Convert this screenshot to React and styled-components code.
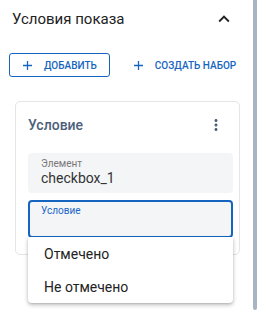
import styled, { createGlobalStyle } from "styled-components"

const GlobalStyle = createGlobalStyle`
    body{
        margin: 0;
        background: #FFFFFF;
        font-family: Roboto, "Liberation Sans", sans-serif;
    }
`

const BLUE = '#1565C0'

function Plus(){
    return(
        <svg width="9" height="9" viewBox="0 0 10 10">
            <path d="M5 0v10M0 5h10" stroke="currentColor" strokeWidth="1.4" fill="none"/>
        </svg>
    )
}

export default function App(){
    const options = ['Отмечено', 'Не отмечено']

    return(
        <>
            <GlobalStyle/>
            <Page>
                <Panel>
                    <Header>
                        <p>Условия показа</p>
                        <svg width="22" height="22" viewBox="0 0 24 24">
                            <path d="M12 8l-6 6 1.41 1.41L12 10.83l4.59 4.58L18 14z" fill="#222222"/>
                        </svg>
                    </Header>
                    <Actions>
                        <ActionButton $outlined><Plus/>Добавить</ActionButton>
                        <ActionButton><Plus/>Создать набор</ActionButton>
                    </Actions>
                    <Card>
                        <CardHeader>
                            <p>Условие</p>
                            <svg width="18" height="18" viewBox="0 0 24 24">
                                <path d="M12 8c1.1 0 2-.9 2-2s-.9-2-2-2-2 .9-2 2 .9 2 2 2zm0 2c-1.1 0-2 .9-2 2s.9 2 2 2 2-.9 2-2-.9-2-2-2zm0 6c-1.1 0-2 .9-2 2s.9 2 2 2 2-.9 2-2-.9-2-2-2z" fill="#4D5F7A"/>
                            </svg>
                        </CardHeader>
                        <Field>
                            <label>Элемент</label>
                            <span>checkbox_1</span>
                        </Field>
                        <SelectField>
                            <label>Условие</label>
                            <Menu>
                                {options.map((option, index) => (
                                    <MenuItem key={index}>{option}</MenuItem>
                                ))}
                            </Menu>
                        </SelectField>
                    </Card>
                </Panel>
                <Scrollbar/>
            </Page>
        </>
    )
}

const Page = styled.div`
    display: flex;
    width: 268px;
    height: 317px;
    overflow: hidden;
`
const Panel = styled.div`
    width: 253px;
    flex-shrink: 0;
`
const Scrollbar = styled.div`
    width: 4px;
    height: 310px;
    background-color: #A9B4C3;
    border-radius: 0 0 2px 2px;
`
const Header = styled.div`
    display: flex;
    align-items: center;
    justify-content: space-between;
    height: 38px;
    padding: 0 18px 0 12px;
    >p{
        margin: 0;
        font-size: 15px;
        color: #222222;
    }
`
const Actions = styled.div`
    display: flex;
    align-items: center;
    gap: 10px;
    margin-top: 15px;
    padding-left: 9px;
`
const ActionButton = styled.button`
    display: flex;
    align-items: center;
    gap: 12px;
    height: 24px;
    box-sizing: border-box;
    padding: 0 12px 0 13px;
    background: transparent;
    border: 1px solid ${props => props.$outlined ? BLUE : 'transparent'};
    border-radius: 3px;
    color: ${BLUE};
    font-family: Roboto, "Liberation Sans", sans-serif;
    font-size: 10px;
    font-weight: 500;
    text-transform: uppercase;
    white-space: nowrap;
`
const Card = styled.div`
    margin: 24px 13px 0 15px;
    height: 154px;
    box-sizing: border-box;
    border: 1px solid #E3E5E9;
    border-radius: 5px;
    padding: 0 6px 0 12px;
`
const CardHeader = styled.div`
    display: flex;
    align-items: center;
    justify-content: space-between;
    height: 46px;
    padding-right: 8px;
    >p{
        margin: 0;
        font-size: 14px;
        font-weight: 500;
        color: #4D5F7A;
    }
`
const Field = styled.div`
    display: flex;
    flex-direction: column;
    height: 40px;
    box-sizing: border-box;
    margin-top: 5px;
    padding: 5px 12px 0 13px;
    background-color: #F4F5F7;
    border-radius: 4px;
    >label{
        font-size: 10px;
        line-height: 12px;
        color: #777777;
    }
    >span{
        font-size: 14px;
        line-height: 17px;
        color: #333333;
    }
`
const SelectField = styled.div`
    position: relative;
    height: 38px;
    box-sizing: border-box;
    margin-top: 7px;
    padding: 3px 11px 0 11px;
    background-color: #F4F5F7;
    border: 2px solid ${BLUE};
    border-radius: 4px;
    >label{
        display: block;
        font-size: 10px;
        line-height: 12px;
        color: #1A66C9;
    }
`
const Menu = styled.div`
    position: absolute;
    top: 100%;
    left: -2px;
    right: -2px;
    margin-top: 1px;
    background-color: #FFFFFF;
    border-radius: 0 0 4px 4px;
    box-shadow: 0 2px 4px rgba(0, 0, 0, 0.25), 0 1px 2px rgba(0, 0, 0, 0.1);
    z-index: 2;
`
const MenuItem = styled.div`
    display: flex;
    align-items: center;
    height: 33px;
    padding-left: 16px;
    font-size: 14px;
    color: #222222;
`
